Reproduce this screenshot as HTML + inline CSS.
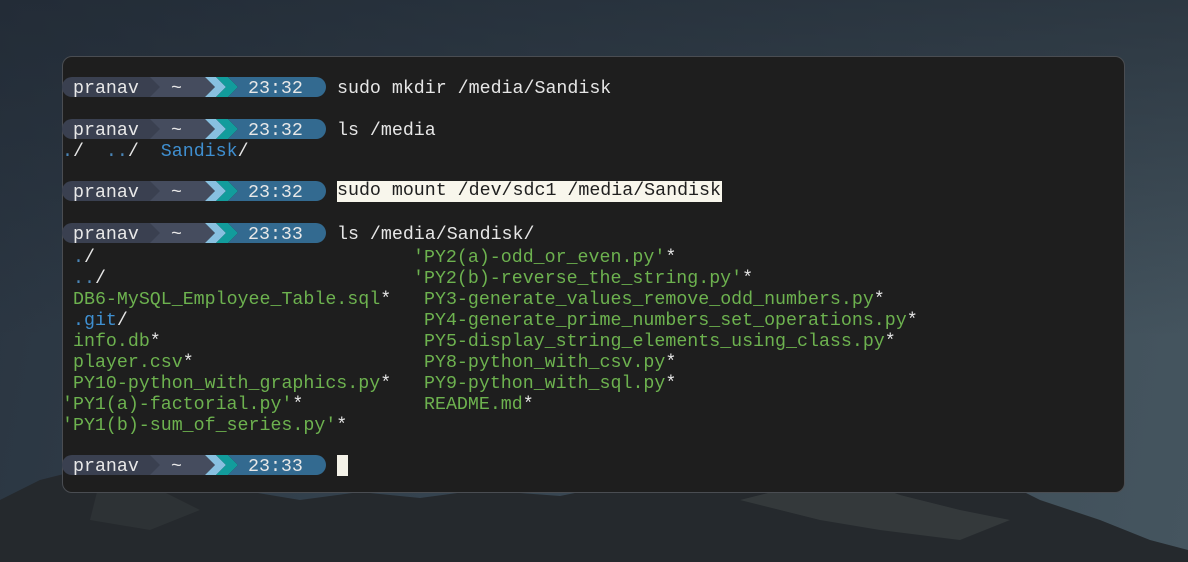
<!DOCTYPE html>
<html><head><meta charset="utf-8"><style>
html,body{margin:0;padding:0;width:1188px;height:562px;overflow:hidden}
body{position:relative;background:linear-gradient(100deg,#2a3541 0%,#35434f 40%,#45555f 100%);font-family:"Liberation Mono",monospace;font-size:18.3px}
.sky{position:absolute;inset:0;background:linear-gradient(180deg,rgba(30,38,48,0.6) 0%,rgba(0,0,0,0) 60%)}
.win{position:absolute;left:62px;top:56px;width:1063px;height:437px;background:#1e1e1e;border:1px solid #4a4d52;border-radius:10px;box-sizing:border-box}
.l{position:absolute;white-space:pre;line-height:21px;height:21px;color:#e6e6e6;margin-top:3px}
.p{position:absolute;left:62px;width:265px;height:20px}
.g{color:#6db24f}.b{color:#3f8fd0}.d{color:#4a86b8}.w{color:#e8e8e8}
.hl{background:#f8f6ec;color:#202020}
</style></head><body>
<div class="sky"></div>
<svg style="position:absolute;left:0;top:440px" width="1188" height="122" viewBox="0 0 1188 122">
<polygon fill="#25292d" points="0,60 40,40 80,30 120,20 180,35 240,50 300,60 360,52 420,58 480,50 560,56 640,40 700,45 760,30 820,38 880,26 940,40 980,30 1040,60 1100,80 1150,100 1188,110 1188,122 0,122"/>
<polygon fill="#3a4042" opacity="0.7" points="740,60 800,45 860,40 900,55 960,70 1010,80 960,100 880,90 820,80"/>
<polygon fill="#34393b" opacity="0.6" points="100,40 160,50 200,70 150,90 90,80"/>
</svg>
<div class="win"></div>

<svg width="0" height="0" style="position:absolute"><defs>
<g id="pr">
<polygon fill="#454c5e" points="80,0 143,0 153,10 143,20 80,20"/>
<path fill="#3a4050" d="M10,0 H88 L98,10 L88,20 H10 A10,10 0 0 1 10,0 Z"/>
<polygon fill="#88c0e0" points="143,0 154,0 164,10 154,20 143,20 153,10"/>
<polygon fill="#129c9c" points="154,0 166,0 176,10 166,20 154,20 164,10"/>
<path fill="#336a90" d="M166,0 H254 A10,10 0 0 1 254,20 H166 L176,10 Z"/>
</g></defs></svg>

<svg class="p" style="top:77px" viewBox="0 0 265 20"><use href="#pr"/></svg>
<div class="l w" style="left:73px;top:76px">pranav</div><div class="l w" style="left:171px;top:76px">~</div><div class="l w" style="left:248px;top:76px">23:32</div>
<div class="l" style="left:337px;top:76px">sudo mkdir /media/Sandisk</div>

<svg class="p" style="top:119px" viewBox="0 0 265 20"><use href="#pr"/></svg>
<div class="l w" style="left:73px;top:118px">pranav</div><div class="l w" style="left:171px;top:118px">~</div><div class="l w" style="left:248px;top:118px">23:32</div>
<div class="l" style="left:337px;top:118px">ls /media</div>
<div class="l" style="left:62px;top:139px"><span class="d">.</span>/  <span class="d">..</span>/  <span class="b">Sandisk</span>/</div>

<svg class="p" style="top:181px" viewBox="0 0 265 20"><use href="#pr"/></svg>
<div class="l w" style="left:73px;top:180px">pranav</div><div class="l w" style="left:171px;top:180px">~</div><div class="l w" style="left:248px;top:180px">23:32</div>
<div class="l hl" style="left:337px;top:178px;padding-right:1px">sudo mount /dev/sdc1 /media/Sandisk</div>

<svg class="p" style="top:223px" viewBox="0 0 265 20"><use href="#pr"/></svg>
<div class="l w" style="left:73px;top:222px">pranav</div><div class="l w" style="left:171px;top:222px">~</div><div class="l w" style="left:248px;top:222px">23:33</div>
<div class="l" style="left:337px;top:222px">ls /media/Sandisk/</div>

<div class="l" style="left:73px;top:245px"><span class="d">.</span>/</div>
<div class="l" style="left:73px;top:266px"><span class="d">..</span>/</div>
<div class="l" style="left:73px;top:287px"><span class="g">DB6-MySQL_Employee_Table.sql</span>*</div>
<div class="l" style="left:73px;top:308px"><span class="b">.git</span>/</div>
<div class="l" style="left:73px;top:329px"><span class="g">info.db</span>*</div>
<div class="l" style="left:73px;top:350px"><span class="g">player.csv</span>*</div>
<div class="l" style="left:73px;top:371px"><span class="g">PY10-python_with_graphics.py</span>*</div>
<div class="l" style="left:62px;top:392px"><span class="g">'PY1(a)-factorial.py'</span>*</div>
<div class="l" style="left:62px;top:413px"><span class="g">'PY1(b)-sum_of_series.py'</span>*</div>

<div class="l" style="left:413px;top:245px"><span class="g">'PY2(a)-odd_or_even.py'</span>*</div>
<div class="l" style="left:413px;top:266px"><span class="g">'PY2(b)-reverse_the_string.py'</span>*</div>
<div class="l" style="left:424px;top:287px"><span class="g">PY3-generate_values_remove_odd_numbers.py</span>*</div>
<div class="l" style="left:424px;top:308px"><span class="g">PY4-generate_prime_numbers_set_operations.py</span>*</div>
<div class="l" style="left:424px;top:329px"><span class="g">PY5-display_string_elements_using_class.py</span>*</div>
<div class="l" style="left:424px;top:350px"><span class="g">PY8-python_with_csv.py</span>*</div>
<div class="l" style="left:424px;top:371px"><span class="g">PY9-python_with_sql.py</span>*</div>
<div class="l" style="left:424px;top:392px"><span class="g">README.md</span>*</div>

<svg class="p" style="top:455px" viewBox="0 0 265 20"><use href="#pr"/></svg>
<div class="l w" style="left:73px;top:454px">pranav</div><div class="l w" style="left:171px;top:454px">~</div><div class="l w" style="left:248px;top:454px">23:33</div>
<div style="position:absolute;left:337px;top:455px;width:11px;height:21px;background:#f4f2e8"></div>
</body></html>
